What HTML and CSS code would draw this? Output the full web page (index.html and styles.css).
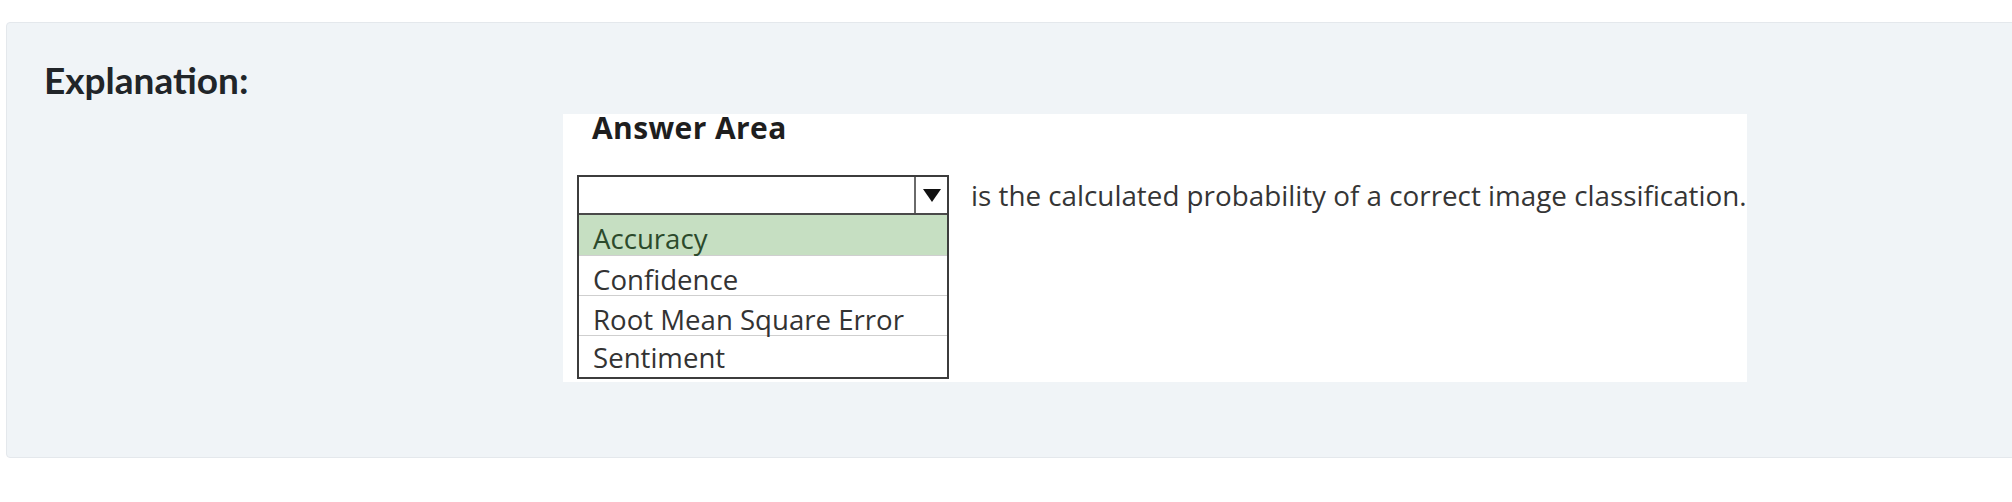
FILE: index.html
```html
<!DOCTYPE html>
<html lang="en">
<head>
<meta charset="utf-8">
<title>Explanation</title>
<link rel="stylesheet" href="styles.css">
</head>
<body>
  <div class="panel">
    <h3 class="panel-title">Explanation:</h3>
    <div class="answer-area">
      <h4 class="answer-title">Answer Area</h4>
      <div class="answer-row">
        <div class="dropdown">
          <div class="dd-head">
            <div class="dd-value"></div>
            <div class="dd-button">
              <svg class="dd-arrow" width="18" height="13" viewBox="0 0 18 13"><polygon points="0,0 18,0 9,13" fill="#111"/></svg>
            </div>
          </div>
          <ul class="dd-list">
            <li class="dd-item dd-selected">Accuracy</li>
            <li class="dd-item">Confidence</li>
            <li class="dd-item">Root Mean Square Error</li>
            <li class="dd-item">Sentiment</li>
          </ul>
        </div>
        <p class="sentence">is the calculated probability of a correct image classification.</p>
      </div>
    </div>
  </div>
</body>
</html>
```

FILE: styles.css
```css
html, body {
  margin: 0;
  padding: 0;
  background: #ffffff;
  overflow: hidden;
}

body {
  padding: 22px 0 0 6px;
  font-family: "Open Sans", "Liberation Sans", sans-serif;
}

.panel {
  box-sizing: border-box;
  width: calc(100% + 40px);
  height: 436px;
  background: #f0f4f7;
  border: 1px solid #e4e8ec;
  border-radius: 4px;
  padding: 35px 0 0 37px;
}

.panel-title {
  margin: 0;
  font-family: Lato, "Liberation Sans", sans-serif;
  font-weight: 700;
  font-size: 37px;
  line-height: 43px;
  color: #212529;
}

.answer-area {
  box-sizing: border-box;
  width: 1184px;
  height: 268px;
  margin: 13px 0 0 519px;
  background: #ffffff;
  padding: 0 0 0 14px;
}

.answer-title {
  margin: 0 0 33px 15px;
  font-family: "Open Sans", "Liberation Sans", sans-serif;
  font-weight: 700;
  font-size: 30px;
  line-height: 28px;
  color: #1e1e1e;
  letter-spacing: 0.4px;
}

.answer-row {
  display: flex;
  align-items: flex-start;
  gap: 22px;
}

.dropdown {
  box-sizing: border-box;
  width: 372px;
  border: 2px solid #3c3c3c;
  flex: none;
}

.dd-head {
  display: flex;
  height: 36px;
  border-bottom: 2px solid #4a4a4a;
}

.dd-value {
  flex: 1;
}

.dd-button {
  width: 33px;
  border-left: 2px solid #6a6a6a;
  display: flex;
  justify-content: center;
  padding-top: 12px;
  box-sizing: border-box;
}

.dd-arrow {
  display: block;
}

.dd-list {
  list-style: none;
  margin: 0;
  padding: 0;
}

.dd-item {
  box-sizing: border-box;
  height: 40px;
  padding: 3px 0 0 14px;
  font-size: 27.6px;
  line-height: 40px;
  color: #333333;
  white-space: nowrap;
}

.dd-item + .dd-item {
  border-top: 1px solid #cfcfcf;
}

.dd-item:last-child {
  height: 42px;
  padding-top: 1px;
}

.dd-selected {
  background: #c6dfc2;
  color: #2c4a2c;
}

.sentence {
  margin: 0;
  font-size: 27.8px;
  line-height: 40px;
  color: #353535;
  white-space: nowrap;
}
```
